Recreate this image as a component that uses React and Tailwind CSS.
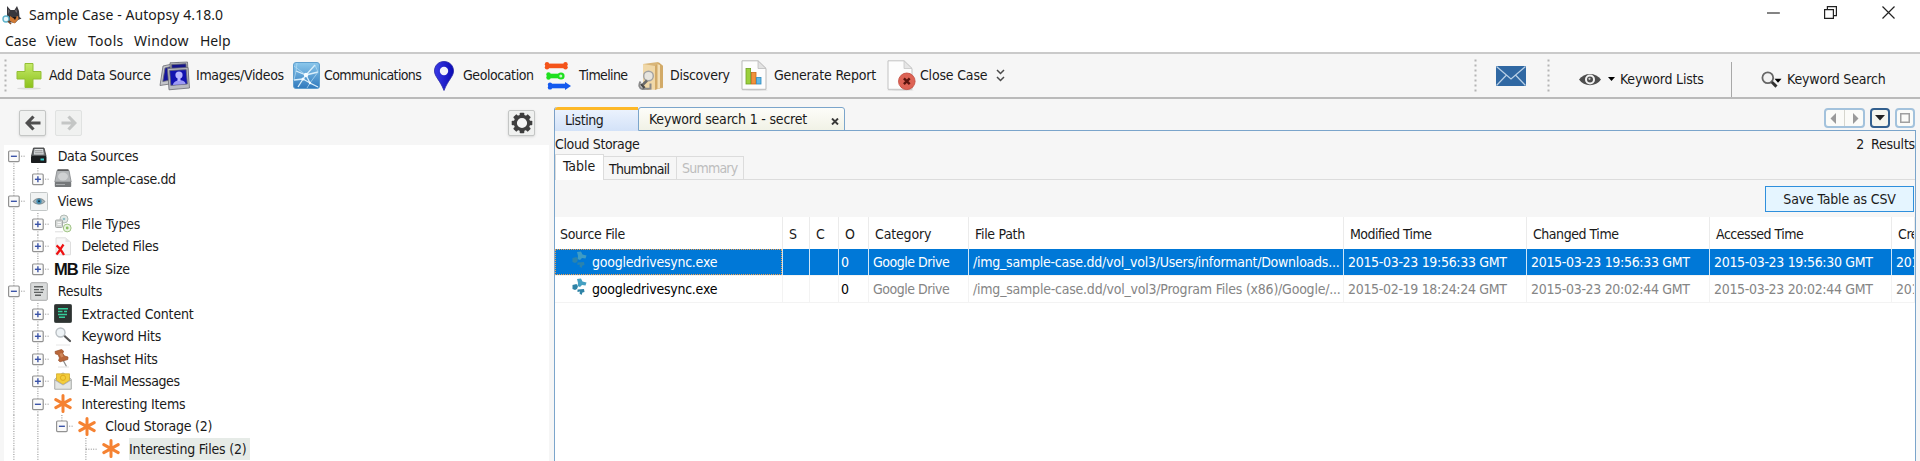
const UI = "font-['DejaVu_Sans_Condensed','DejaVu_Sans',sans-serif]";
const SYS = "font-['Noto_Sans',sans-serif]";

/* ---------- toolbar icons ---------- */

function DogIcon() {
  return (
    <svg width="20" height="20" viewBox="0 0 20 20">
      <path d="M5 1 L8.5 5 L12.5 5 L15 1 L17 6 L17.5 12 L19.5 13.5 L16 15 L13 18 L7 17 L5 12 Z" fill="#38373c" />
      <path d="M6.2 4 L7.5 6 L6.5 9 Z M14.2 4 L13.2 6 L15 8 Z" fill="#8b8286" />
      <path d="M8 11 L11 13 L16 11 L16.5 14 L12.5 18.5 L8 16 Z" fill="#d07a35" />
      <path d="M10.5 12 L14.5 12 L13 15 Z" fill="#1d1512" />
      <circle cx="4" cy="14" r="3" fill="#e8f6fb" stroke="#5fb4cc" strokeWidth="1.4" />
      <path d="M6 16.2 L9 19" stroke="#7a4a2a" strokeWidth="1.6" />
    </svg>
  );
}

function PlusIcon() {
  return (
    <svg width="26" height="28" viewBox="0 0 26 28">
      <defs>
        <linearGradient id="plusFill" x1="0" y1="0" x2="0" y2="1">
          <stop offset="0" stopColor="#c6ea6a" />
          <stop offset="1" stopColor="#8cc21c" />
        </linearGradient>
      </defs>
      <ellipse cx="13" cy="26.5" rx="12" ry="1" fill="#dcdcdc" />
      <path d="M9 1.5 H17 V9.5 H25 V17 H17 V25.5 H9 V17 H1 V9.5 H9 Z" fill="url(#plusFill)" stroke="#93bf35" />
    </svg>
  );
}

function ImagesIcon() {
  return (
    <svg width="32" height="30" viewBox="0 0 32 30">
      <g stroke="#6b6c74" strokeWidth="0.8">
        <path d="M4 5 L20 1.5 L24 21 L1 24.5 Z" fill="#c4c5ca" />
        <path d="M6 7 L19 4 L22 17 L3.8 20.5 Z" fill="#15159c" />
        <path d="M11 1.8 L28.5 1 L29.5 20 L12 21 Z" fill="#b4b5bc" />
        <path d="M12.6 3.6 L27 2.8 L27.6 15 L13 16 Z" fill="#14148a" />
        <path d="M8.5 7.5 L29 6.5 L30.5 27 L10 28.8 Z" fill="#b9bac1" />
        <path d="M10.6 9.5 L27.2 8.6 L28.4 23 L11.8 24.4 Z" fill="#1313b0" />
      </g>
      <circle cx="20" cy="14" r="3.6" fill="#b9b6ff" />
      <path d="M14 24 C14 18.2 26.5 17.5 26.5 23 Z" fill="#9d9af5" />
      <path d="M18.5 17 H21.5 V20 H18.5 Z" fill="#b9b6ff" />
    </svg>
  );
}

function CommunicationsIcon() {
  return (
    <svg width="27" height="27" viewBox="0 0 27 27">
      <defs>
        <linearGradient id="commFill" x1="0" y1="0" x2="0" y2="1">
          <stop offset="0" stopColor="#8cc8ec" />
          <stop offset="1" stopColor="#2f79bd" />
        </linearGradient>
      </defs>
      <rect x="0.5" y="0.5" width="26" height="26" rx="2.5" fill="url(#commFill)" stroke="#5f9fce" />
      <path d="M3 9 L13 13 L22 3 M13 13 L25 10 M13 13 L17 21 L25 25 M13 13 L10 17 L5 25 M1 18 L10 17 M10 17 L17 21" stroke="#d9eefa" strokeWidth="1.3" fill="none" />
      <path d="M1 4 L13 13 M17 21 L14 26 M4 1 L3 9 L1 18 M22 3 L25 10 L17 21" stroke="#b5dcf3" strokeWidth="0.7" fill="none" />
      <circle cx="13" cy="13" r="2.2" fill="#f4fbff" />
      <circle cx="10" cy="17" r="1.5" fill="#f4fbff" />
      <circle cx="17" cy="21" r="1.2" fill="#f4fbff" />
    </svg>
  );
}

function PinIcon() {
  return (
    <svg width="20" height="30" viewBox="0 0 20 30">
      <defs>
        <linearGradient id="pinFill" x1="0" y1="0" x2="1" y2="0">
          <stop offset="0" stopColor="#3a3ae6" />
          <stop offset="1" stopColor="#0a0ab4" />
        </linearGradient>
      </defs>
      <path d="M10 0.5 C4.5 0.5 0.5 4.6 0.5 10 C0.5 15.5 6 19 10 29.5 C14 19 19.5 15.5 19.5 10 C19.5 4.6 15.5 0.5 10 0.5 Z" fill="url(#pinFill)" stroke="#2323a6" strokeWidth="0.8" />
      <circle cx="10" cy="10" r="4.2" fill="#f2f2fb" />
    </svg>
  );
}

function TimelineIcon() {
  return (
    <svg width="28" height="28" viewBox="0 0 28 28">
      <g fill="#f4541a">
        <circle cx="3" cy="2.3" r="2.2" /><circle cx="3" cy="5.3" r="2.2" />
        <circle cx="21.5" cy="2.3" r="2.2" /><circle cx="21.5" cy="5.3" r="2.2" />
        <rect x="3" y="1.6" width="19" height="4.6" />
      </g>
      <g fill="#1ee01e">
        <circle cx="4.5" cy="12.5" r="2.2" /><circle cx="4.5" cy="15.5" r="2.2" />
        <rect x="4" y="11.7" width="13" height="4.6" />
        <circle cx="17" cy="14" r="3.6" />
      </g>
      <circle cx="16.8" cy="14" r="1.5" fill="#c9f7c9" />
      <g fill="#1459ee">
        <circle cx="6" cy="22.7" r="2.2" /><circle cx="6" cy="25.4" r="2.2" />
        <rect x="6" y="21.7" width="16" height="4.6" />
        <path d="M21 20 L27 24 L21 28 Z" />
      </g>
    </svg>
  );
}

function DiscoveryIcon() {
  return (
    <svg width="27" height="30" viewBox="0 0 27 30">
      <path d="M5 3 L20 1 L25 5 V27 L9 29 L5 25 Z" fill="#d9b679" />
      <path d="M5 3 L17 5 V29 L5 26 Z" fill="#f0d8a8" />
      <path d="M17 5 L21 1.5 L25 5 V26 L17 29 Z" fill="#d2aa68" />
      <path d="M19.5 3 L22 4 V27 L19.5 28 Z" fill="#f3dfb6" />
      <circle cx="10.5" cy="15" r="4.8" fill="#e7e5df" stroke="#a2a2a2" strokeWidth="1.4" />
      <path d="M9 19.5 L5 23.5" stroke="#6b6b6b" strokeWidth="2.6" />
      <path d="M2.5 20.5 C0.5 24 1 27 4.5 28 L12.5 27.5 V22.5" stroke="#8a8a8a" strokeWidth="2" fill="none" />
      <path d="M3 23 L6.5 27" stroke="#4b4b4b" strokeWidth="2.6" />
    </svg>
  );
}

function ReportIcon() {
  return (
    <svg width="27" height="31" viewBox="0 0 27 31">
      <ellipse cx="13.5" cy="30" rx="13" ry="0.8" fill="#d8d8d8" />
      <path d="M1 0.8 H17 L25 8.5 V29.3 H1 Z" fill="#fdfdfd" stroke="#b9b9b9" />
      <path d="M17 0.8 V8.5 H25 Z" fill="#e2e2e2" stroke="#bcbcbc" strokeWidth="0.8" />
      <rect x="5" y="8.5" width="4.6" height="15.5" fill="#9bd03c" stroke="#6fa222" strokeWidth="0.8" />
      <rect x="10.4" y="12.5" width="4.6" height="11.5" fill="#f0913a" stroke="#c96a1c" strokeWidth="0.8" />
      <rect x="15.6" y="17.5" width="4.4" height="6.5" fill="#61b9e6" stroke="#2f88bb" strokeWidth="0.8" />
    </svg>
  );
}

function CloseCaseIcon() {
  return (
    <svg width="29" height="31" viewBox="0 0 29 31">
      <ellipse cx="13.5" cy="30" rx="13" ry="0.8" fill="#d8d8d8" />
      <path d="M1 0.8 H17 L25 8.5 V29.3 H1 Z" fill="#fdfdfd" stroke="#c2c2c2" />
      <path d="M17 0.8 V8.5 H25 Z" fill="#e6e6e6" stroke="#c6c6c6" strokeWidth="0.8" />
      <circle cx="19.8" cy="21.3" r="8.3" fill="#dd6355" stroke="#c2493c" strokeWidth="0.8" />
      <path d="M16.9 18.4 L22.7 24.2 M22.7 18.4 L16.9 24.2" stroke="#5b140e" strokeWidth="2.4" />
    </svg>
  );
}

function Grip() {
  return (
    <svg width="3" height="33" viewBox="0 0 3 33">
      <path d="M1.5 0.5 V33" stroke="#b4b4b4" strokeWidth="2" strokeDasharray="2 3" />
    </svg>
  );
}

/* ---------- toolbar ---------- */

const TOOLS = [
  { label: "Add Data Source", Icon: PlusIcon, item: "w-[143px]", icon: "w-[33px]", text: "tracking-[-0.27px]" },
  { label: "Images/Videos", Icon: ImagesIcon, item: "w-[134px]", icon: "w-[37px]", text: "tracking-[-0.33px]" },
  { label: "Communications", Icon: CommunicationsIcon, item: "w-[141px]", icon: "w-[31px]", text: "tracking-[-0.62px]" },
  { label: "Geolocation", Icon: PinIcon, item: "w-[110px]", icon: "w-[29px]", text: "tracking-[-0.42px]" },
  { label: "Timeline", Icon: TimelineIcon, item: "w-[94px]", icon: "w-[35px]", text: "tracking-[-0.65px]" },
  { label: "Discovery", Icon: DiscoveryIcon, item: "w-[103px]", icon: "w-[32px]", text: "tracking-[-0.27px]" },
  { label: "Generate Report", Icon: ReportIcon, item: "w-[146px]", icon: "w-[33px]", text: "tracking-[-0.16px]" },
  { label: "Close Case", Icon: CloseCaseIcon, item: "w-[109px]", icon: "w-[33px]", text: "tracking-[-0.18px]" },
];

function Toolbar() {
  return (
    <div className="flex h-[45px] shrink-0 items-center border-b-2 border-[#bababa] bg-[#f6f6f6] pl-[4px]">
      <Grip />
      <div className="ml-[9px] flex items-center">
        {TOOLS.map(({ label, Icon, item, icon, text }) => (
          <div key={label} className={`flex items-center ${item}`}>
            <div className={`shrink-0 ${icon}`}><Icon /></div>
            <span className={text}>{label}</span>
          </div>
        ))}
        <svg width="9" height="13" viewBox="0 0 9 13" fill="none" stroke="#4a4a4a" strokeWidth="1.5">
          <path d="M1 1 L4.5 4.5 L8 1 M1 8 L4.5 11.5 L8 8" />
        </svg>
      </div>
      <div className="ml-auto flex h-full w-[446px] items-center">
        <Grip />
        <svg className="ml-[19px]" width="30" height="20" viewBox="0 0 30 20">
          <rect width="30" height="20" fill="#3068a3" />
          <path d="M0.5 0.5 L15 13 L29.5 0.5 M0.5 19.5 L10.5 9 M29.5 19.5 L19.5 9" stroke="#b9d0e6" strokeWidth="1.2" fill="none" />
        </svg>
        <div className="ml-[21px]"><Grip /></div>
        <div className="ml-[28px] flex items-center pt-[7px]">
          <svg width="24" height="15" viewBox="0 0 24 15">
            <path d="M1 7.5 C6 0 18 0 23 7.5 C18 15 6 15 1 7.5 Z" fill="#4d4d4d" />
            <circle cx="12" cy="7.5" r="5" fill="#f2f2f2" />
            <circle cx="12" cy="7.5" r="3" fill="#4d4d4d" />
            <circle cx="11.5" cy="6.8" r="1.1" fill="#d0d0d0" />
          </svg>
          <svg className="ml-[6px]" width="7" height="4" viewBox="0 0 7 4"><path d="M0 0 H7 L3.5 4 Z" fill="#000" /></svg>
          <span className="ml-[5px] w-[111px] tracking-[-0.2px]">Keyword Lists</span>
        </div>
        <div className="h-[35px] w-px self-end bg-[#a8a8a8]" />
        <div className="ml-[29px] flex items-center pt-[7px]">
          <svg width="21" height="17" viewBox="0 0 21 17">
            <circle cx="6.8" cy="6.8" r="5.4" fill="#f2f2f2" stroke="#666" strokeWidth="1.8" />
            <path d="M10.8 11 L15.5 15.6" stroke="#333" strokeWidth="3" />
            <path d="M13.5 7.8 H20.5 L17 11.8 Z" fill="#000" />
          </svg>
          <span className="ml-[5px] tracking-[-0.17px]">Keyword Search</span>
        </div>
      </div>
    </div>
  );
}

/* ---------- tree icons ---------- */

function DrivesIcon() {
  return (
    <svg width="18" height="18" viewBox="0 0 18 18">
      <path d="M3.5 1 H14 L16 9 H1.5 Z" fill="#6d7174" stroke="#333" strokeWidth="0.8" />
      <path d="M4.5 2 H13 L13.7 7.5 H4 Z" fill="#dfe2e4" />
      <path d="M5 3.8 H12.5 M5 5.8 H12.8" stroke="#777" strokeWidth="0.8" />
      <rect x="1" y="9" width="15.5" height="7" rx="0.8" fill="#1b1d1f" />
      <rect x="10.5" y="11.5" width="3.5" height="2" fill="#35c9c9" />
    </svg>
  );
}
function DiskIcon() {
  return (
    <svg width="18" height="19" viewBox="0 0 18 19">
      <path d="M3 1.5 H15 L17.2 13 H0.8 Z" fill="#b3b6b8" stroke="#85888a" strokeWidth="0.8" />
      <ellipse cx="9" cy="7.5" rx="5" ry="4" fill="#cfd1d2" />
      <path d="M3.5 1 H14.5" stroke="#444" strokeWidth="1.4" />
      <rect x="0.8" y="13" width="16.4" height="5" rx="0.8" fill="#75787a" />
      <path d="M2 15.5 H11" stroke="#a8abad" />
    </svg>
  );
}
function ViewsIcon() {
  return (
    <svg width="18" height="19" viewBox="0 0 18 19">
      <rect x="0.5" y="0.5" width="17" height="18" rx="1" fill="#f1f3f3" stroke="#c3c7c7" />
      <path d="M3 9.5 C6 5.5 12 5.5 15 9.5 C12 13 6 13 3 9.5 Z" fill="#a9b4b8" stroke="#6c787d" strokeWidth="0.8" />
      <circle cx="9" cy="9.3" r="2.6" fill="#3f8bb0" />
      <circle cx="9" cy="9.3" r="1" fill="#12303f" />
    </svg>
  );
}
function FileTypesIcon() {
  return (
    <svg width="18" height="19" viewBox="0 0 18 19">
      <rect x="6" y="1" width="8" height="8" rx="4" fill="#e3e8e4" stroke="#b2bab4" />
      <circle cx="10" cy="5" r="1.3" fill="#8fc0c8" />
      <rect x="1.5" y="6" width="7" height="7.5" rx="1" fill="#d4d7d5" stroke="#a6aaa8" />
      <path d="M3.5 8.5 H7 M3.5 10.5 H7" stroke="#f7f7f7" />
      <circle cx="13.2" cy="14" r="3.9" fill="#eaf4e2" stroke="#9fc384" />
      <circle cx="13.2" cy="14" r="1.4" fill="#8cc063" />
      <path d="M1 17.8 H9" stroke="#ddd" />
    </svg>
  );
}
function DeletedIcon() {
  return (
    <svg width="18" height="19" viewBox="0 0 18 19">
      <path d="M2 0.8 H11.5 L16.5 5 V17.8 H2 Z" fill="#f7f7f7" stroke="#dedede" />
      <path d="M11.5 0.8 V5 H16.5 Z" fill="#e4e4e4" />
      <path d="M2.5 8.5 C5 10 8 14.5 10 18 M9.5 7.5 C7 11 5 15 2.5 17.5" stroke="#ee1111" strokeWidth="2.3" fill="none" />
    </svg>
  );
}
function ResultsIcon() {
  return (
    <svg width="18" height="19" viewBox="0 0 18 19">
      <rect x="0.7" y="0.7" width="16.6" height="17.6" rx="1" fill="#d9dbdb" stroke="#a9abab" />
      <path d="M4 4.8 H13 M4 7.6 H9 M10.5 7.6 H14 M4 10.4 H13 M5 13.2 H11" stroke="#5e6161" strokeWidth="1.4" />
    </svg>
  );
}
function ExtractedIcon() {
  return (
    <svg width="18" height="19" viewBox="0 0 18 19">
      <rect x="0.5" y="0.5" width="17" height="18" rx="1" fill="#2d3331" stroke="#454b49" />
      <path d="M4 4.8 H14 M4 7.6 H8.5 M10 7.6 H13 M4 10.4 H13 M5 13.2 H11" stroke="#35cf9b" strokeWidth="1.5" />
    </svg>
  );
}
function MagnifierIcon() {
  return (
    <svg width="18" height="19" viewBox="0 0 18 19">
      <path d="M10.5 9 L16 14" stroke="#555" strokeWidth="2.2" strokeLinecap="round" />
      <circle cx="6.5" cy="5.5" r="4.5" fill="#eef3f6" stroke="#b9bfc3" strokeWidth="1.4" />
      <path d="M2 18 H16" stroke="#e6e6e6" />
    </svg>
  );
}
function PushpinIcon() {
  return (
    <svg width="18" height="19" viewBox="0 0 18 19">
      <path d="M9 11 L12.5 17.5" stroke="#8f8f8f" strokeWidth="1.3" />
      <path d="M1 2.5 L7.5 0.5 L9.5 2 L8.8 4.5 L10.5 7 L14 8 L13.8 10.5 L6 12.8 L4.5 11.5 L5.5 9 L4 5.5 L1.5 5 Z" fill="#b9673a" stroke="#964d28" strokeWidth="0.7" />
      <path d="M5.5 4.8 L8.2 4 L9.5 7.5 L7 8.5 Z" fill="#d28a5c" />
      <path d="M4 18 H15" stroke="#e2e2e2" />
    </svg>
  );
}
function MailIcon() {
  return (
    <svg width="18" height="19" viewBox="0 0 18 19">
      <path d="M0.8 7 L9 0.8 L17.2 7 V17 H0.8 Z" fill="#d8dad8" stroke="#a8aaa8" strokeWidth="0.8" />
      <path d="M2.5 1.8 H15.5 V8.5 L9 12.5 L2.5 8.5 Z" fill="#f3cd3c" stroke="#cfa41f" strokeWidth="0.7" />
      <circle cx="9" cy="5.8" r="2.6" fill="none" stroke="#e0ab1c" />
      <path d="M0.8 8 L9 13 L17.2 8 V17.2 H0.8 Z" fill="#e4e6e4" stroke="#a8aaa8" strokeWidth="0.8" />
    </svg>
  );
}
function StarIcon() {
  return (
    <svg width="18" height="19" viewBox="0 0 18 19">
      <path d="M9 1.6 V17.4 M1.8 5.6 L16.2 13.6 M16.2 5.6 L1.8 13.6" stroke="#f58232" strokeWidth="3" strokeLinecap="round" />
    </svg>
  );
}
function SizeIcon() {
  return <span className="block pt-px font-['Liberation_Sans',sans-serif] text-[16.5px] leading-[21px] font-bold tracking-[-0.9px] text-[#111]">MB</span>;
}

/* Guide cell kinds: blank, line, plus / minus (box), branch. `up` and `down` say where the dotted line goes. */
function Guide({ kind, up, down }) {
  return (
    <svg className="shrink-0" width="23.8" height="22.5" viewBox="0 0 23.8 22.5" fill="none">
      <g stroke="#8a8a8a" strokeDasharray="1 1.4">
        {up && <path d="M11.9 0 V11.2" />}
        {down && <path d="M11.9 11.2 V22.5" />}
        {kind !== "line" && <path d="M12 11.2 H23.8" />}
      </g>
      {(kind === "plus" || kind === "minus") && (
        <>
          <rect x="6.6" y="6" width="10.6" height="10.6" rx="1" fill="#fafafa" stroke="#929292" strokeWidth="1.2" />
          <path d="M8.9 11.3 H14.9" stroke="#3c54a8" strokeWidth="1.4" />
          {kind === "plus" && <path d="M11.9 8.3 V14.3" stroke="#3c54a8" strokeWidth="1.4" />}
        </>
      )}
    </svg>
  );
}

const line = { kind: "line", up: true, down: true };
const blank = { kind: "line" };
const plus = { kind: "plus", up: true, down: true };
const plusLast = { kind: "plus", up: true };
const minus = { kind: "minus", up: true, down: true };
const minusLast = { kind: "minus", up: true };

const TREE = [
  { label: "Data Sources", guides: [{ kind: "minus", down: true }], Icon: DrivesIcon, text: "tracking-[-0.28px]" },
  { label: "sample-case.dd", guides: [line, plusLast], Icon: DiskIcon, text: "tracking-[-0.36px]" },
  { label: "Views", guides: [minus], Icon: ViewsIcon, text: "tracking-[-0.25px]" },
  { label: "File Types", guides: [line, plus], Icon: FileTypesIcon, text: "tracking-[-0.15px]" },
  { label: "Deleted Files", guides: [line, plus], Icon: DeletedIcon, text: "tracking-[-0.31px]" },
  { label: "File Size", guides: [line, plusLast], Icon: SizeIcon, text: "tracking-[-0.3px]" },
  { label: "Results", guides: [minus], Icon: ResultsIcon, text: "tracking-[-0.15px]" },
  { label: "Extracted Content", guides: [line, plus], Icon: ExtractedIcon, text: "tracking-[-0.17px]" },
  { label: "Keyword Hits", guides: [line, plus], Icon: MagnifierIcon, text: "tracking-[-0.22px]" },
  { label: "Hashset Hits", guides: [line, plus], Icon: PushpinIcon, text: "tracking-[-0.28px]" },
  { label: "E-Mail Messages", guides: [line, plus], Icon: MailIcon, text: "tracking-[-0.38px]" },
  { label: "Interesting Items", guides: [line, minus], Icon: StarIcon, text: "tracking-[-0.2px]" },
  { label: "Cloud Storage (2)", guides: [line, line, minusLast], Icon: StarIcon, text: "tracking-[-0.25px]" },
  { label: "Interesting Files (2)", guides: [line, line, blank, { kind: "branch", up: true, down: true }], Icon: StarIcon, text: "tracking-[-0.19px]", selected: true },
];

function NavButton({ children, dim }) {
  return (
    <div className={`flex h-[26px] w-[27px] items-center justify-center rounded-[2px] border bg-[#f0f1f0] ${dim ? "border-[#e0e2e1]" : "border-[#c4c6c5] shadow-sm"}`}>
      {children}
    </div>
  );
}

const GEAR_TEETH = [0, 45, 90, 135, 180, 225, 270, 315];

function Explorer() {
  return (
    <div className="flex w-[549px] shrink-0 flex-col">
      <div className="flex h-[46px] shrink-0 items-start pt-[11px] pr-[14px] pl-[19px]">
        <NavButton>
          <svg width="16" height="16" viewBox="0 0 16 16" fill="none" stroke="#4f4f4f" strokeWidth="3.2"><path d="M15.5 8 H3 M8.5 1.5 L2.2 8 L8.5 14.5" /></svg>
        </NavButton>
        <div className="ml-[9px]">
          <NavButton dim>
            <svg width="16" height="16" viewBox="0 0 16 16" fill="none" stroke="#c4c6c5" strokeWidth="3.2"><path d="M0.5 8 H13 M7.5 1.5 L13.8 8 L7.5 14.5" /></svg>
          </NavButton>
        </div>
        <div className="ml-auto">
          <NavButton>
            <svg width="22" height="22" viewBox="-11 -11 22 22">
              {GEAR_TEETH.map((a) => (
                <rect key={a} x="-2.3" y="-10.3" width="4.6" height="5" rx="0.8" fill="#3e3e3e" transform={`rotate(${a})`} />
              ))}
              <circle r="6.7" fill="#f4f4f4" stroke="#3e3e3e" strokeWidth="3.2" />
            </svg>
          </NavButton>
        </div>
      </div>
      <div className="ml-[4px] flex-1 overflow-hidden bg-white">
        {TREE.map(({ label, guides, Icon, text, selected }) => (
          <div key={label} className="-ml-[1.6px] flex h-[22.5px] items-center">
            {guides.map((g, i) => <Guide key={i} {...g} />)}
            <div className="ml-[4px] w-[18px] shrink-0">
              <Icon />
            </div>
            <span className={`ml-[9.5px] h-full pr-[4px] leading-[23px] whitespace-nowrap ${text} ${selected ? "bg-[#e6ebe7]" : ""}`}>{label}</span>
          </div>
        ))}
      </div>
    </div>
  );
}

/* ---------- results ---------- */

const COLS = "grid grid-cols-[228px_27px_29px_30px_100px_375px_183px_183px_182px_1fr]";

const HEADERS = [
  { label: "Source File", cls: "pl-[5px] tracking-[-0.29px]" },
  { label: "S", cls: "pl-[6px]" },
  { label: "C", cls: "pl-[6px]" },
  { label: "O", cls: "pl-[6px]" },
  { label: "Category", cls: "pl-[6px] tracking-[-0.15px]" },
  { label: "File Path", cls: "pl-[6px] tracking-[-0.3px]" },
  { label: "Modified Time", cls: "pl-[6px] tracking-[-0.54px]" },
  { label: "Changed Time", cls: "pl-[6px] tracking-[-0.46px]" },
  { label: "Accessed Time", cls: "pl-[6px] tracking-[-0.48px]" },
  { label: "Created Time", cls: "pl-[6px] tracking-[-0.4px]" },
];

const ROWS = [
  {
    path: "/img_sample-case.dd/vol_vol3/Users/informant/Downloads...",
    pathCls: "tracking-[-0.24px]",
    times: ["2015-03-23 19:56:33 GMT", "2015-03-23 19:56:33 GMT", "2015-03-23 19:56:30 GMT", "2015-03-23 19:56:30 GMT"],
    selected: true,
  },
  {
    path: "/img_sample-case.dd/vol_vol3/Program Files (x86)/Google/...",
    pathCls: "tracking-[-0.22px]",
    times: ["2015-02-19 18:24:24 GMT", "2015-03-23 20:02:44 GMT", "2015-03-23 20:02:44 GMT", "2015-03-23 20:02:44 GMT"],
  },
];

function SyncIcon({ selected }) {
  const main = selected ? "#3f9cc4" : "#45a0c2";
  const dark = selected ? "#2a83ad" : "#2f83a6";
  return (
    <svg width="15" height="18" viewBox="0 0 15 18">
      <path d="M5 1 L9 0.5 L10.5 3.5 L14.5 4.5 L13.5 7.5 L10 7 L8 9 L5.5 8 L6 5 Z" fill={main} />
      <path d="M0.5 7 L4.5 6 L6 8.5 L5 11 L3 12 L0.5 11 Z" fill={dark} />
      <path d="M5.5 11.5 L12 11 L12.5 14 L10.5 14.5 L9.5 17 L7.5 15.5 L8 13.5 L5.5 14 Z" fill={dark} />
    </svg>
  );
}

function ResultRow({ path, pathCls, times, selected }) {
  const look = selected ? "border-[#cfe6f7] bg-[#0078d7] text-white" : "border-[#f3f3f3] bg-white text-[#858585]";
  const cell = `flex items-center overflow-hidden whitespace-nowrap border-r pt-px ${look}`;
  const strong = selected ? "text-white" : "text-black";
  return (
    <div className={`${COLS} h-[27px] border-b border-[#f3f3f3]`}>
      <div className={`flex items-center border-r pt-px pl-[17px] ${look}`}>
        <div className="-mt-[5px]"><SyncIcon selected={selected} /></div>
        <span className={`ml-[5px] tracking-[-0.24px] ${strong}`}>googledrivesync.exe</span>
      </div>
      <div className={cell} />
      <div className={cell} />
      <div className={`${cell} pl-[2px]`}><span className={strong}>0</span></div>
      <div className={`${cell} pl-[4px]`}><span className="tracking-[-0.48px]">Google Drive</span></div>
      <div className={`${cell} pl-[4px]`}><span className={pathCls}>{path}</span></div>
      {times.map((t, i) => (
        <div key={i} className={`${cell} pl-[4px]`}><span className="tracking-[-0.32px]">{t}</span></div>
      ))}
    </div>
  );
}

function FocusedRow(props) {
  return (
    <div className="relative">
      <ResultRow {...props} />
      <div className="pointer-events-none absolute top-0 left-0 h-[26px] w-[227px] border border-dotted border-[#f0a050]" />
    </div>
  );
}

function ViewTabs() {
  return (
    <div className="flex h-[27px] items-end border-b border-[#dcdcdc] leading-[18px]">
      <div className="-mb-px h-[26px] w-[49px] border border-b-0 border-[#dcdcdc] bg-white pt-[2px] pl-[7px]">Table</div>
      <div className="h-[23px] w-[73px] border-t border-r border-[#dcdcdc] pt-[3px] pl-[5px] tracking-[-0.7px]">Thumbnail</div>
      <div className="h-[23px] w-[67px] border-t border-r border-[#dcdcdc] pt-[2px] pl-[5px] tracking-[-0.78px] text-[#bdbdbd]">Summary</div>
    </div>
  );
}

function Results() {
  return (
    <div className="ml-[5px] flex w-[1362px] shrink-0 flex-col">
      <div className="flex h-[32px] shrink-0 items-end">
        <div className="flex h-[24px] w-[84px] flex-col rounded-tl-[3px] border-l border-[#7b9fc6] bg-gradient-to-b from-[#eef4fe] to-[#d3e2f8]">
          <div className="h-[3px] w-full rounded-tl-[3px] bg-[#fdb827]" />
          <span className="pl-[10px] leading-[20px] tracking-[-0.45px]">Listing</span>
        </div>
        <div className="flex h-[24px] w-[207px] items-center rounded-t-[3px] border border-[#7ba5cb] bg-gradient-to-b from-[#fdfdf9] to-[#f1f2e6] pt-px pl-[10px]">
          <span className="tracking-[-0.19px]">Keyword search 1 - secret</span>
          <svg className="mt-[3px] mr-[5px] ml-auto" width="8" height="7" viewBox="0 0 8 7"><path d="M1 0.5 L7 6.5 M7 0.5 L1 6.5" stroke="#3a3a3a" strokeWidth="1.9" /></svg>
        </div>
        <div className="mb-[3px] ml-auto flex items-center pr-[1px]">
          <div className="flex h-[20px] w-[41px] items-center justify-around rounded-[4px] border-2 border-[#a3c2dc] bg-[#fbfbf8]">
            <svg width="6" height="11" viewBox="0 0 6 11"><path d="M6 0 V11 L0.5 5.5 Z" fill="#9a9a9a" /></svg>
            <div className="h-full w-px bg-[#d6d6ce]" />
            <svg width="6" height="11" viewBox="0 0 6 11"><path d="M0 0 V11 L5.5 5.5 Z" fill="#9a9a9a" /></svg>
          </div>
          <div className="ml-[5px] flex h-[20px] w-[20px] items-center justify-center rounded-[4px] border-2 border-[#33608f] bg-[#f5f5ee]">
            <svg width="10" height="6" viewBox="0 0 10 6"><path d="M0 0 H10 L5 5.5 Z" fill="#222" /></svg>
          </div>
          <div className="ml-[5px] flex h-[20px] w-[20px] items-center justify-center rounded-[4px] border-2 border-[#a3c2dc] bg-[#fbfbf8]">
            <svg width="10" height="10" viewBox="0 0 10 10"><rect x="0.75" y="0.75" width="8.5" height="8.5" fill="none" stroke="#a0a0a0" strokeWidth="1.5" /></svg>
          </div>
        </div>
      </div>
      <div className="-mt-px flex flex-1 flex-col border-x border-[#7ba5cb]">
        <div className="ml-[84px] h-px bg-[#7ba5cb]" />
        <div className="flex h-[22px] items-end justify-between leading-[18px]">
          <span className="tracking-[-0.37px]">Cloud Storage</span>
          <span className="tracking-[-0.2px]">2<span className="ml-[7px]">Results</span></span>
        </div>
        <ViewTabs />
        <div className="flex h-[37px] shrink-0 justify-end pt-[6px] pr-[1px]">
          <div className="flex h-[26px] w-[149px] items-center justify-center border border-[#2f8fdc] bg-[#e5f5ff]">
            <span className="tracking-[-0.15px]">Save Table as CSV</span>
          </div>
        </div>
        <div className="flex-1 bg-white">
          <div className={`${COLS} h-[32px]`}>
            {HEADERS.map(({ label, cls }) => (
              <div key={label} className={`flex items-center overflow-hidden whitespace-nowrap border-r border-[#ebebeb] pt-[3px] ${cls}`}>{label}</div>
            ))}
          </div>
          <FocusedRow {...ROWS[0]} />
          <ResultRow {...ROWS[1]} />
        </div>
      </div>
    </div>
  );
}

export default function App() {
  return (
    <div className={`flex h-[461px] w-full flex-col overflow-hidden bg-[#f6f6f6] text-[14px] text-[#1a1a1a] ${UI}`}>
      <div className={`shrink-0 border-b-2 border-[#cacaca] bg-white ${SYS}`}>
        <div className="flex h-[29px] items-center pl-[2px]">
          <DogIcon />
          <span className="ml-[7px] tracking-[0.07px]">Sample Case - Autopsy 4.18.0</span>
          <div className="mr-[25px] ml-auto flex items-center pb-[4px]">
            <svg width="13" height="13" viewBox="0 0 13 13"><path d="M0 7 H13" stroke="#333" strokeWidth="1.2" /></svg>
            <svg className="ml-[44px]" width="13" height="13" viewBox="0 0 13 13" fill="none" stroke="#222" strokeWidth="1.2">
              <path d="M0.6 3.6 H9.4 V12.4 H0.6 Z M3.4 3.6 V0.6 H12.4 V9.6 H9.4" />
            </svg>
            <svg className="ml-[45px]" width="13" height="13" viewBox="0 0 13 13" stroke="#222" strokeWidth="1.2"><path d="M0.5 0.5 L12.5 12.5 M12.5 0.5 L0.5 12.5" /></svg>
          </div>
        </div>
        <div className="flex h-[23px] items-center pl-[5px]">
          <span className="w-[41px]">Case</span>
          <span className="w-[42px]">View</span>
          <span className="w-[46px] tracking-[0.3px]">Tools</span>
          <span className="w-[66px] tracking-[0.3px]">Window</span>
          <span>Help</span>
        </div>
      </div>
      <Toolbar />
      <div className="flex flex-1 overflow-hidden">
        <Explorer />
        <Results />
      </div>
    </div>
  );
}
